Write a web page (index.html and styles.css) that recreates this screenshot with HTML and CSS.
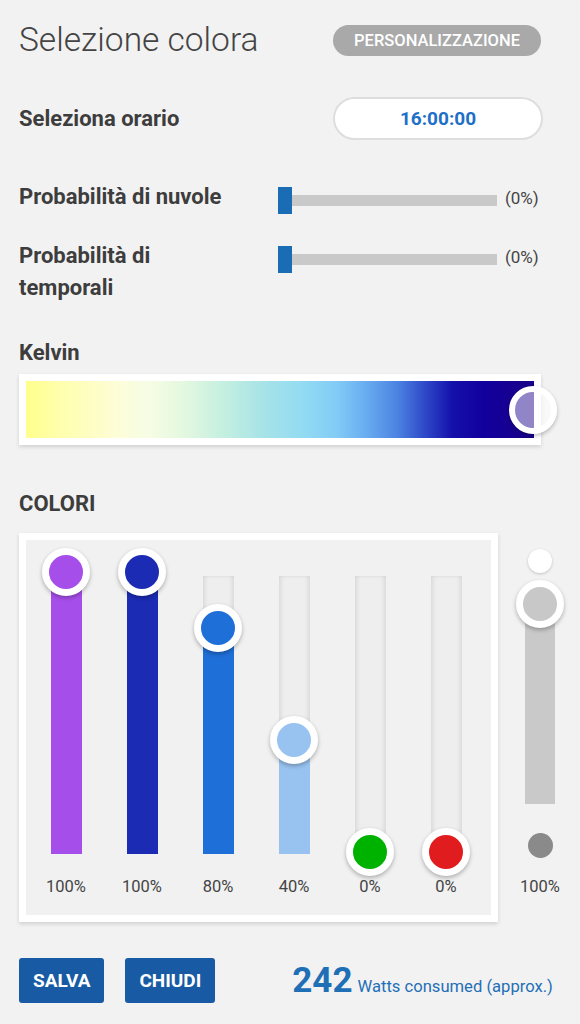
FILE: index.html
```html
<!DOCTYPE html>
<html lang="it">
<head>
<meta charset="utf-8">
<title>Selezione colora</title>
<link rel="stylesheet" href="styles.css">
</head>
<body>
<div class="page">
  <div class="header">
    <h1 class="title">Selezione colora</h1>
    <span class="pill">PERSONALIZZAZIONE</span>
  </div>

  <div class="time-row">
    <span class="label">Seleziona orario</span>
    <div class="time-input">16:00:00</div>
  </div>

  <div class="prob prob-first">
    <span class="label prob-label">Probabilità di nuvole</span>
    <div class="prob-ctrl">
      <div class="slider"><span class="slider-thumb"></span><span class="slider-track"></span></div>
      <span class="prob-pct">(0%)</span>
    </div>
  </div>

  <div class="prob prob-second">
    <span class="label prob-label">Probabilità di temporali</span>
    <div class="prob-ctrl">
      <div class="slider"><span class="slider-thumb"></span><span class="slider-track"></span></div>
      <span class="prob-pct">(0%)</span>
    </div>
  </div>

  <div class="label kelvin-label">Kelvin</div>
  <div class="kelvin-frame">
    <div class="kelvin-gradient"></div>
    <span class="kelvin-thumb"></span>
  </div>

  <div class="label colori-label">COLORI</div>
  <div class="colori-row">
    <div class="colori-panel">
      <div class="channel">
        <div class="ch-track"><span class="ch-thumb c-purple"></span><span class="ch-fill c-purple" style="height:282px"></span></div>
        <span class="ch-pct">100%</span>
      </div>
      <div class="channel">
        <div class="ch-track"><span class="ch-thumb c-navy"></span><span class="ch-fill c-navy" style="height:282px"></span></div>
        <span class="ch-pct">100%</span>
      </div>
      <div class="channel">
        <div class="ch-track"><span class="ch-thumb c-blue"></span><span class="ch-fill c-blue" style="height:226px"></span></div>
        <span class="ch-pct">80%</span>
      </div>
      <div class="channel">
        <div class="ch-track"><span class="ch-thumb c-sky"></span><span class="ch-fill c-sky" style="height:114px"></span></div>
        <span class="ch-pct">40%</span>
      </div>
      <div class="channel">
        <div class="ch-track"><span class="ch-thumb c-green"></span><span class="ch-fill c-green" style="height:2px"></span></div>
        <span class="ch-pct">0%</span>
      </div>
      <div class="channel">
        <div class="ch-track"><span class="ch-thumb c-red"></span><span class="ch-fill c-red" style="height:2px"></span></div>
        <span class="ch-pct">0%</span>
      </div>
    </div>
    <div class="master">
      <span class="master-max"></span>
      <div class="master-track">
        <span class="ch-thumb c-gray"></span>
        <span class="master-fill" style="height:200px"></span>
      </div>
      <span class="master-min"></span>
      <span class="ch-pct">100%</span>
    </div>
  </div>

  <div class="actions">
    <button class="btn">SALVA</button>
    <button class="btn">CHIUDI</button>
    <div class="watts"><span class="watts-num">242</span><span class="watts-text">Watts consumed (approx.)</span></div>
  </div>
</div>
</body>
</html>
```

FILE: styles.css
```css
* { box-sizing: border-box; }
html, body { margin: 0; padding: 0; }
body {
  background: #f2f2f2;
  font-family: Roboto, "Liberation Sans", Arial, sans-serif;
  color: #3d3d3d;
}
.page {
  width: 580px;
  height: 1024px;
  padding: 24px 37px 0 19px;
  overflow: hidden;
}

.header {
  height: 32px;
  display: flex;
  align-items: center;
  justify-content: space-between;
}
.title {
  margin: 0;
  font-size: 33.5px;
  font-weight: 300;
  line-height: 32px;
  color: #444;
  white-space: nowrap;
}
.pill {
  width: 208px;
  height: 31px;
  margin-right: 2px;
  border-radius: 16px;
  background: #a9a9a9;
  color: #fff;
  font-size: 16.5px;
  font-weight: 500;
  display: flex;
  align-items: center;
  justify-content: center;
}

.label {
  font-size: 22px;
  font-weight: 700;
  line-height: 32px;
  color: #3d3d3d;
}

.time-row {
  margin-top: 41px;
  height: 43px;
  display: flex;
  align-items: center;
  justify-content: space-between;
}
.time-input {
  width: 210px;
  height: 43px;
  border: 2px solid #dedede;
  border-radius: 22px;
  background: #fff;
  color: #1e6fc8;
  font-size: 19px;
  font-weight: 700;
  display: flex;
  align-items: center;
  justify-content: center;
}

.prob {
  display: flex;
  align-items: flex-start;
}
.prob-first { margin-top: 41px; }
.prob-second { margin-top: 26px; }
.prob-label {
  width: 220px;
  margin-right: 39px;
}
.prob-ctrl {
  margin-top: 6px;
  height: 27px;
  display: flex;
  align-items: center;
}
.slider {
  width: 219px;
  height: 27px;
  display: flex;
  align-items: center;
}
.slider-thumb {
  width: 14px;
  height: 27px;
  background: #1a6db4;
}
.slider-track {
  flex: 1;
  height: 11px;
  background: #c9c9c9;
}
.prob-pct {
  margin-left: 8px;
  margin-bottom: 6px;
  font-size: 17px;
  color: #444;
  white-space: nowrap;
}

.kelvin-label { margin-top: 33px; }
.kelvin-frame {
  position: relative;
  margin-top: 5px;
  width: 522px;
  height: 71px;
  padding: 7px;
  background: #fff;
  box-shadow: 0 2px 4px rgba(0,0,0,0.14);
}
.kelvin-gradient {
  height: 57px;
  background: linear-gradient(to right,
    #ffff8c 0%, #ffffaa 6%, #fdfdd8 18%, #f6fde4 24%, #e4f8e0 31%,
    #c4efe0 39%, #a6e2e8 47%, #94dcf2 54%, #82ccf6 61%, #68acf0 67%,
    #4c84e2 73%, #2c44c6 79%, #1410aa 84%, #12009e 90%, #1a0088 100%);
}
.kelvin-thumb {
  position: absolute;
  left: 490px;
  top: 12px;
  width: 48px;
  height: 48px;
  border-radius: 50%;
  border: 6px solid #fff;
  background: rgba(255,255,255,0.52);
  box-shadow: 0 2px 4px rgba(0,0,0,0.25);
}

.colori-label { margin-top: 43px; }
.colori-row {
  margin-top: 13px;
  width: 560px;
  display: flex;
  align-items: flex-start;
}
.colori-panel {
  flex-shrink: 0;
  width: 479px;
  height: 389px;
  border: 7px solid #fff;
  background: #f1f1f1;
  padding-left: 2px;
  display: flex;
  box-shadow: 0 2px 4px rgba(0,0,0,0.14);
}
.channel {
  width: 76px;
  padding-top: 36px;
  display: flex;
  flex-direction: column;
  align-items: center;
}
.ch-track {
  width: 31px;
  height: 278px;
  display: flex;
  flex-direction: column;
  justify-content: flex-end;
  align-items: center;
  background: #eeeeee;
  box-shadow: inset 3px 0 4px -1px rgba(0,0,0,0.09), inset -3px 0 4px -1px rgba(0,0,0,0.09);
}
.ch-thumb {
  position: relative;
  z-index: 1;
  flex-shrink: 0;
  width: 48px;
  height: 48px;
  border-radius: 50%;
  border: 7px solid #fff;
  box-shadow: 0 2px 4px rgba(0,0,0,0.28);
}
.ch-fill {
  flex-shrink: 0;
  width: 31px;
  margin-top: -24px;
}
.ch-pct {
  margin-top: 23px;
  font-size: 16.5px;
  line-height: 20px;
  color: #444;
  white-space: nowrap;
}
.c-purple { background: #a64eea; }
.c-navy { background: #1c2bb4; }
.c-blue { background: #1f6fd8; }
.c-sky { background: #98c3f0; }
.c-green { background: #00b200; }
.c-red { background: #e01c1e; }
.c-gray { background: #c8c8c8; }

.master {
  flex-shrink: 0;
  width: 60px;
  margin-left: 12px;
  padding-top: 16px;
  display: flex;
  flex-direction: column;
  align-items: center;
}
.master-max {
  width: 24px;
  height: 24px;
  border-radius: 50%;
  background: #fff;
  box-shadow: 0 1px 3px rgba(0,0,0,0.2);
}
.master-track {
  margin-top: 7px;
  display: flex;
  flex-direction: column;
  align-items: center;
}
.master-fill {
  width: 30px;
  margin-top: -24px;
  background: #c9c9c9;
}
.master-min {
  margin-top: 29px;
  width: 25px;
  height: 25px;
  border-radius: 50%;
  background: #8a8a8a;
}
.master .ch-pct { margin-top: 19px; }

.actions {
  margin-top: 36px;
  height: 44px;
  display: flex;
  align-items: center;
}
.btn {
  height: 45px;
  padding: 0 14px;
  border: none;
  border-radius: 3px;
  background: #185ba4;
  color: #fff;
  font-family: Roboto, "Liberation Sans", Arial, sans-serif;
  font-size: 19px;
  font-weight: 700;
}
.btn + .btn { margin-left: 21px; }
.watts {
  margin-left: 77px;
  display: flex;
  align-items: baseline;
  color: #1f6fb6;
  white-space: nowrap;
}
.watts-num {
  font-size: 35px;
  font-weight: 700;
}
.watts-text {
  margin-left: 5px;
  font-size: 16.6px;
}
```
